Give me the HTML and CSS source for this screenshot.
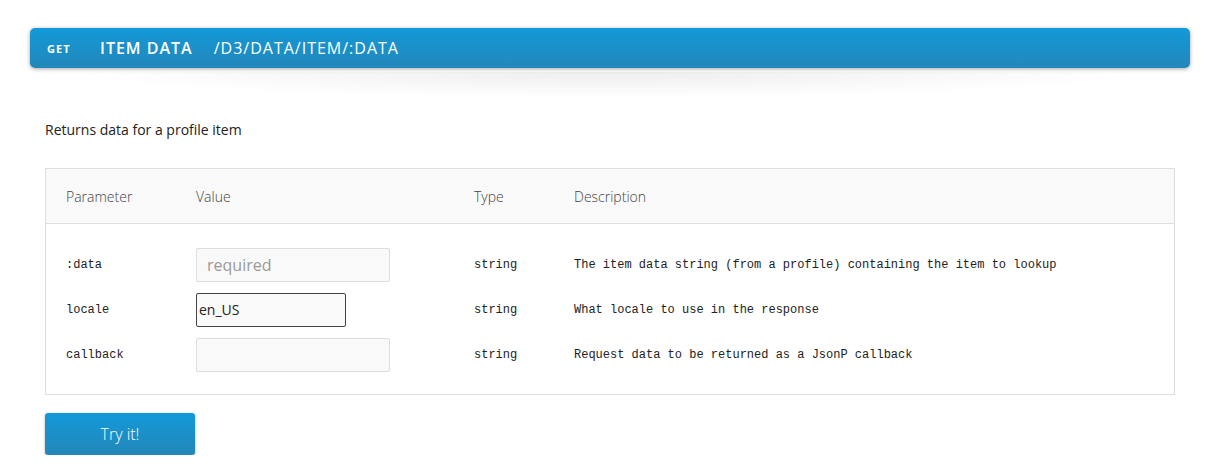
FILE: index.html
```html
<!DOCTYPE html>
<html>
<head>
<meta charset="utf-8">
<link rel="stylesheet" href="styles.css">
</head>
<body>
<div class="page">
  <div class="endpoint">
    <div class="bar">
      <span class="method">GET</span>
      <span class="name">ITEM DATA</span>
      <span class="path">/D3/DATA/ITEM/:DATA</span>
    </div>
  </div>
  <div class="content">
    <p class="summary">Returns data for a profile item</p>
    <div class="params">
      <div class="row head">
        <div>Parameter</div>
        <div>Value</div>
        <div>Type</div>
        <div>Description</div>
      </div>
      <div class="body">
        <div class="row">
          <div class="mono">:data</div>
          <div><input class="field" type="text" placeholder="required"></div>
          <div class="mono">string</div>
          <div class="mono">The item data string (from a profile) containing the item to lookup</div>
        </div>
        <div class="row">
          <div class="mono">locale</div>
          <div><input class="field focus" type="text" value="en_US"></div>
          <div class="mono">string</div>
          <div class="mono">What locale to use in the response</div>
        </div>
        <div class="row">
          <div class="mono">callback</div>
          <div><input class="field" type="text"></div>
          <div class="mono">string</div>
          <div class="mono">Request data to be returned as a JsonP callback</div>
        </div>
      </div>
    </div>
    <button class="try">Try it!</button>
  </div>
</div>
</body>
</html>
```
FILE: styles.css
```css
* { box-sizing: border-box; }
html, body { margin: 0; padding: 0; background: #fff; }
body { font-family: "Open Sans", "Noto Sans", sans-serif; color: #222; }
.page { padding-top: 28px; }
.endpoint { margin-left: 30px; width: 1160px; position: relative; }
.endpoint::after {
  content: "";
  position: absolute;
  left: 40px; right: 40px; top: 44px; height: 26px;
  background: radial-gradient(ellipse 50% 100% at 50% 0%, rgba(0,0,0,0.07), rgba(0,0,0,0) 100%);
}
.bar {
  height: 40px;
  border-radius: 5px;
  background: linear-gradient(#1399d9, #2387b9);
  box-shadow: 0 1px 4px rgba(0,0,0,0.35);
  display: flex;
  align-items: center;
  color: #fff;
  padding-left: 17px;
}
.method { font-size: 11px; font-weight: 700; letter-spacing: 1px; width: 53px; }
.name { font-size: 16px; font-weight: 600; letter-spacing: 1px; margin-right: 21px; }
.path { font-size: 16px; letter-spacing: 1px; font-weight: 400; }
.content { margin-left: 45px; width: 1130px; }
.summary { margin: 52px 0 0; font-size: 14px; line-height: 20px; height: 20px; color: #222; }
.params { margin-top: 28px; border: 1px solid #dedede; }
.row {
  display: grid;
  grid-template-columns: 130px 278px 100px 1fr;
  padding-left: 20px;
  align-items: center;
}
.head {
  height: 55px;
  background: #f9f9f9;
  border-bottom: 1px solid #dedede;
  font-size: 14px;
  color: #444;
  font-weight: 300;
}
.body { padding: 18px 0 17px; }
.body .row { height: 45px; }
.mono { font-family: "Liberation Mono", "DejaVu Sans Mono", monospace; font-size: 12px; color: #222; }
.field {
  display: block;
  width: 194px;
  height: 34px;
  border: 1px solid #ddd;
  border-radius: 2px;
  background: #f9f9f9;
  font-family: "Open Sans", sans-serif;
  font-size: 16px;
  padding: 0 10px;
  outline: none;
  color: #222;
}
.field::placeholder { color: #999; }
.field.focus {
  width: 150px;
  border: 1px solid #444;
  padding: 0 2px;
  font-size: 14px;
}
.try {
  display: block;
  margin-top: 18px;
  width: 150px;
  height: 42px;
  border: none;
  border-radius: 3px;
  background: linear-gradient(#1399d9, #2387b9);
  box-shadow: 0 1px 3px rgba(0,0,0,0.3);
  color: #fff;
  font-family: "Open Sans", sans-serif;
  font-size: 16px;
  font-weight: 300;
}
```
